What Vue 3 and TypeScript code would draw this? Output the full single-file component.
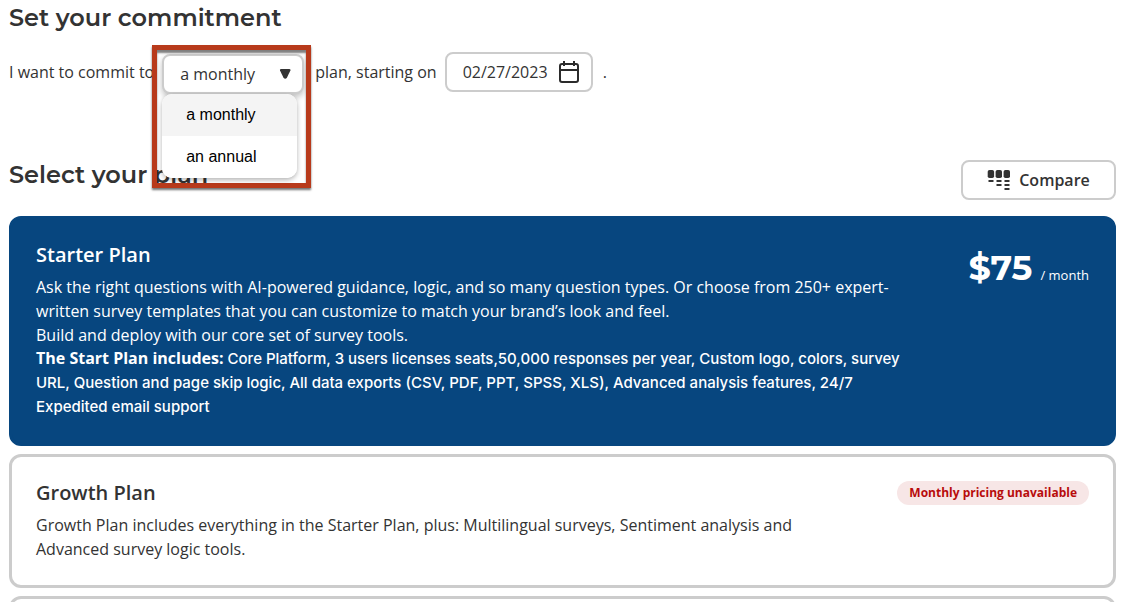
<script setup lang="ts">
import { ref } from 'vue'

interface Term {
  value: string
  label: string
}

const terms: Term[] = [
  { value: 'monthly', label: 'a monthly' },
  { value: 'annual', label: 'an annual' },
]
const term = ref('monthly')
const startDate = ref('02/27/2023')
const menuOpen = ref(true)

function choose(value: string) {
  term.value = value
  menuOpen.value = false
}
</script>

<template>
  <main class="page">
    <h2 class="heading">Set your commitment</h2>

    <div class="commitment">
      <label for="term">I want to commit to</label>
      <div class="term">
        <select id="term" v-model="term" class="term-select">
          <option v-for="t in terms" :key="t.value" :value="t.value">{{ t.label }}</option>
        </select>
        <svg class="arrow" width="12" height="12" viewBox="0 0 12 12" aria-hidden="true">
          <path d="M2 1h8.4Q12 1 11.4 2.6L8 9.4Q6.2 12 4.4 9.4L1 2.6Q.4 1 2 1Z" fill="#333" />
        </svg>
        <div class="highlight"></div>
        <div v-if="menuOpen" class="menu">
          <button
            v-for="t in terms"
            :key="t.value"
            type="button"
            class="menu-item"
            :class="{ selected: t.value === term }"
            @click="choose(t.value)"
          >{{ t.label }}</button>
        </div>
      </div>
      <label for="start" class="start-label">plan, starting on</label>
      <div class="date">
        <input id="start" v-model="startDate" type="text" class="date-input" />
        <button type="button" class="date-button" aria-label="Choose date">
          <svg width="22" height="24" viewBox="0 0 22 24" fill="none" stroke="#2b2b2b" stroke-width="2">
            <rect x="2" y="4" width="18" height="18" rx="2" />
            <path d="M2 10h18M6 1v5M16 1v5" />
          </svg>
        </button>
      </div>
      <span>.</span>
    </div>

    <div class="plans-head">
      <h2 class="heading">Select your plan</h2>
      <button type="button" class="compare">
        <svg width="23" height="20" viewBox="0 0 23 20" fill="#333" aria-hidden="true">
          <rect x="0.7" y="0" width="6.4" height="8" rx="1.8" />
          <rect x="8.6" y="0" width="6.4" height="8" rx="1.8" />
          <rect x="16.6" y="0" width="6.4" height="8" rx="1.8" />
          <path d="M1.5 10h5v2h-5zM9.5 10h5v2h-5zM17.5 10h5v2h-5zM9.5 14h5v2h-5zM17.5 14h5v2h-5zM17.5 18h5v2h-5z" />
        </svg>
        Compare
      </button>
    </div>

    <section class="plans">
      <article class="plan active">
        <div class="plan-text">
          <h3>Starter Plan</h3>
          <p>
            Ask the right questions with AI-powered guidance, logic, and so many question types. Or choose
            from 250+ expert-written survey templates that you can customize to match your brand’s look and feel.
          </p>
          <p>Build and deploy with our core set of survey tools.</p>
          <p class="features">
            <strong>The Start Plan includes:</strong> Core Platform, 3 users licenses seats,50,000 responses per
            year, Custom logo, colors, survey URL, Question and page skip logic, All data exports (CSV, PDF, PPT,
            SPSS, XLS), Advanced analysis features, 24/7 Expedited email support
          </p>
        </div>
        <div class="price"><span class="amount">$75</span><span class="period">/ month</span></div>
      </article>

      <article class="plan">
        <div class="plan-text">
          <h3>Growth Plan</h3>
          <p>
            Growth Plan includes everything in the Starter Plan, plus: Multilingual surveys, Sentiment analysis
            and Advanced survey logic tools.
          </p>
        </div>
        <span class="badge">Monthly pricing unavailable</span>
      </article>

      <article class="plan"></article>
    </section>
  </main>
</template>

<style>
body {
  background: #fff;
}
</style>

<style scoped>
* {
  box-sizing: border-box;
}
.page {
  height: 100vh;
  overflow: hidden;
  padding: 2px 8px 0 9px;
  font: 16px/24px "Open Sans", "Noto Sans", sans-serif;
  color: #333;
}
h2,
h3,
p {
  margin: 0;
}
.heading {
  font: 600 24px/32px Montserrat, Inter, sans-serif;
}
.commitment {
  display: flex;
  align-items: center;
  height: 40px;
  margin-top: 18px;
}
.term {
  position: relative;
  z-index: 1;
  width: 142px;
  height: 40px;
  margin: 4px 11px 0 8px;
}
.term-select {
  appearance: none;
  width: 100%;
  height: 40px;
  padding: 0 16px;
  border: 2px solid #ccc;
  border-radius: 8px;
  background: #fff;
  box-shadow: 0 3px 6px rgba(0, 0, 0, 0.25);
  color: #333;
  font: inherit;
}
.arrow {
  position: absolute;
  right: 13px;
  top: 14px;
  pointer-events: none;
}
.highlight {
  position: absolute;
  left: -10px;
  top: -9px;
  width: 159px;
  height: 143px;
  border: 5px solid #b83a1b;
  box-shadow: 0 2px 2px rgba(0, 0, 0, 0.55), inset 0 3px 2px rgba(0, 0, 0, 0.5);
  pointer-events: none;
}
.menu {
  position: absolute;
  left: 0;
  top: 40px;
  width: 135px;
  overflow: hidden;
  border-radius: 10px;
  background: #fff;
  box-shadow: 0 2px 5px rgba(0, 0, 0, 0.3);
}
.menu-item {
  display: block;
  width: 100%;
  height: 42px;
  padding: 0 24px;
  border: 0;
  background: #fff;
  color: #000;
  font: 16px/24px "Liberation Sans", Arial, sans-serif;
  text-align: left;
}
.menu-item.selected {
  background: #f4f4f4;
}
.date {
  display: flex;
  align-items: center;
  justify-content: space-between;
  width: 148px;
  height: 40px;
  margin: 0 10px 0 8px;
  padding: 0 11px 0 16px;
  border: 2px solid #ccc;
  border-radius: 8px;
}
.date-input {
  width: 92px;
  padding: 0;
  border: 0;
  outline: 0;
  background: none;
  color: #333;
  font: inherit;
}
.date-button {
  display: flex;
  padding: 0;
  border: 0;
  background: none;
}
.plans-head {
  display: flex;
  align-items: flex-start;
  justify-content: space-between;
  margin-top: 67px;
}
.compare {
  display: flex;
  align-items: center;
  justify-content: center;
  gap: 9px;
  width: 155px;
  height: 40px;
  margin-top: 1px;
  padding: 0;
  border: 2px solid #ccc;
  border-radius: 8px;
  background: #fff;
  color: #333;
  font: 600 16px/24px "Open Sans", sans-serif;
}
.plans {
  display: grid;
  gap: 8px;
  margin-top: 16px;
}
.plan {
  display: flex;
  align-items: flex-start;
  justify-content: space-between;
  gap: 48px;
  min-height: 54px;
  padding: 24px;
  border: 3px solid #ccc;
  border-radius: 12px;
}
.plan.active {
  border-color: #07467f;
  background: #07467f;
  color: #fff;
}
.plan.active p {
  font-weight: 500;
}
h3 {
  margin-bottom: 8px;
  font-size: 20px;
  font-weight: 600;
  line-height: 24px;
}
.plan .features {
  font-family: Inter, sans-serif;
  font-size: 15px;
}
.features strong {
  font-family: "Open Sans", sans-serif;
  font-size: 16px;
  font-weight: 700;
  line-height: 20px;
}
.price {
  display: flex;
  align-items: baseline;
  gap: 8px;
  white-space: nowrap;
}
.amount {
  font: 700 35px/50px Montserrat, Inter, sans-serif;
}
.period {
  font-size: 13px;
}
.badge {
  flex: none;
  padding: 0 12px;
  border-radius: 12px;
  background: #f7e6e6;
  color: #b80c0c;
  font-size: 12px;
  font-weight: 700;
}
</style>
